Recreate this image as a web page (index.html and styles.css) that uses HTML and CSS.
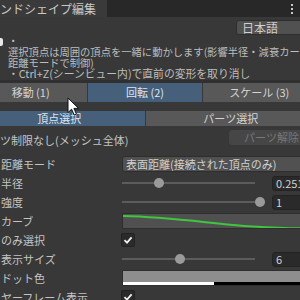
FILE: index.html
```html
<!DOCTYPE html>
<html lang="ja">
<head>
    <meta charset="UTF-8">
    <title>ブレンドシェイプ編集</title>
    <link rel="stylesheet" href="styles.css">
</head>
<body>
    <div class="window">
        <div class="tabbar">
            <div class="tab">ンドシェイプ編集</div>
            <div class="menu-dots"><span></span><span></span><span></span></div>
        </div>

        <div class="lang-row">
            <div class="dropdown lang">日本語</div>
        </div>

        <div class="helpbox">
            <span class="help-icon"></span>
            <div class="help-text">
                <p>・</p>
                <p>選択頂点は周囲の頂点を一緒に動かします(影響半径・減衰カーブ・距</p>
                <p>距離モードで制御)</p>
                <p class="wide">・Ctrl+Z(シーンビュー内)で直前の変形を取り消し</p>
            </div>
        </div>

        <div class="toolbar">
            <div class="tbtn">移動 (1)</div>
            <div class="tbtn on">回転 (2)</div>
            <div class="tbtn">スケール (3)</div>
        </div>

        <div class="toolbar seg">
            <div class="tbtn on">頂点選択</div>
            <div class="tbtn">パーツ選択</div>
        </div>

        <div class="restrict-row">
            <span class="label">ツ制限なし(メッシュ全体)</span>
            <div class="btn disabled">パーツ解除</div>
        </div>

        <div class="props">
            <div class="prop">
                <span class="label">距離モード</span>
                <div class="dropdown">表面距離(接続された頂点のみ)</div>
            </div>
            <div class="prop">
                <span class="label">半径</span>
                <div class="slider">
                    <div class="track"><span class="knob" style="left: 24%"></span></div>
                    <div class="field">0.251</div>
                </div>
            </div>
            <div class="prop">
                <span class="label">強度</span>
                <div class="slider">
                    <div class="track"><span class="knob" style="left: 100%"></span></div>
                    <div class="field">1</div>
                </div>
            </div>
            <div class="prop">
                <span class="label">カーブ</span>
                <div class="curve">
                    <svg width="190" height="16" viewBox="0 0 190 16">
                        <path d="M0 2 C 50 3, 90 10, 130 12.5 S 175 14, 190 14.5" fill="none" stroke="#3fc63f" stroke-width="2"/>
                    </svg>
                </div>
            </div>
            <div class="prop">
                <span class="label">のみ選択</span>
                <div class="check">
                    <svg width="10" height="10" viewBox="0 0 10 10"><path d="M1.5 5.2 L4 7.6 L8.6 2.4" fill="none" stroke="#f0f0f0" stroke-width="1.8"/></svg>
                </div>
            </div>
            <div class="prop">
                <span class="label">表示サイズ</span>
                <div class="slider">
                    <div class="track"><span class="knob" style="left: 40%"></span></div>
                    <div class="field">6</div>
                </div>
            </div>
            <div class="prop">
                <span class="label">ドット色</span>
                <div class="color">
                    <div class="swatch"></div>
                    <div class="alpha"><span style="width: 91px"></span></div>
                </div>
            </div>
            <div class="prop">
                <span class="label">ヤーフレーム表示</span>
                <div class="check">
                    <svg width="10" height="10" viewBox="0 0 10 10"><path d="M1.5 5.2 L4 7.6 L8.6 2.4" fill="none" stroke="#f0f0f0" stroke-width="1.8"/></svg>
                </div>
            </div>
        </div>

        <svg class="cursor" width="14" height="20" viewBox="0 0 14 20">
            <path d="M1 1 L1 15.5 L4.6 12.2 L7.2 18 L9.4 17 L6.9 11.4 L11.6 11.4 Z" fill="#fff" stroke="#111" stroke-width="1" stroke-linejoin="round"/>
        </svg>
    </div>
</body>
</html>
```

FILE: styles.css
```css
body {
    margin: 0;
    padding: 0;
    background: #383838;
    font-family: "Noto Sans CJK JP", "Noto Sans", sans-serif;
    color: #c4c4c4;
}
.window {
    position: relative;
    width: 300px;
    height: 300px;
    overflow: hidden;
    background: #383838;
}
.tabbar {
    display: flex;
    align-items: stretch;
    justify-content: space-between;
    height: 17px;
    background: #282828;
}
.tab {
    width: 107px;
    background: #3a3a3a;
    font-size: 12px;
    line-height: 17px;
    color: #c8c8c8;
    white-space: nowrap;
    overflow: hidden;
}
.menu-dots {
    display: flex;
    flex-direction: column;
    justify-content: center;
    gap: 2px;
    width: 16px;
    align-items: center;
}
.menu-dots span {
    width: 2px;
    height: 2px;
    background: #c8c8c8;
}
.lang-row {
    display: flex;
    justify-content: flex-end;
    margin-top: 3px;
    margin-right: -14px;
    height: 15px;
}
.dropdown {
    box-sizing: border-box;
    height: 15px;
    background: #515151;
    border: 1px solid #2e2e2e;
    border-radius: 3px;
    font-size: 11px;
    line-height: 13px;
    padding-left: 3px;
    color: #d0d0d0;
    white-space: nowrap;
    overflow: hidden;
}
.dropdown.lang {
    width: 78px;
    font-size: 12px;
    padding-left: 5px;
}
.helpbox {
    position: relative;
    height: 45px;
    padding-left: 8px;
    border-bottom: 3px solid #303030;
}
.help-icon {
    position: absolute;
    left: -4px;
    top: 3px;
    width: 7px;
    height: 8px;
    border-radius: 2px;
    background: #e8e8e8;
}
.help-text p {
    margin: 0;
    font-size: 10.3px;
    line-height: 11px;
    color: #bdbdbd;
    white-space: nowrap;
}
.help-text p.wide {
    font-size: 10.8px;
}
.toolbar {
    display: flex;
    gap: 1px;
    height: 19px;
    margin: 0 -16px 0 -26px;
}
.tbtn {
    flex: 1;
    background: #585858;
    color: #d4d4d4;
    font-size: 11px;
    line-height: 19px;
    text-align: center;
    white-space: nowrap;
}
.tbtn.on {
    background: #46607c;
    color: #dde6ef;
}
.toolbar.seg {
    height: 15px;
    margin-top: 9px;
}
.toolbar.seg .tbtn {
    line-height: 15px;
}
.restrict-row {
    display: flex;
    justify-content: space-between;
    align-items: center;
    height: 16px;
    margin: 3px -14px 0 0;
}
.label {
    font-size: 11px;
    padding-left: 1px;
    white-space: nowrap;
    color: #c4c4c4;
}
.restrict-row .label {
    padding-left: 0;
    position: relative;
    top: 3px;
}
.btn {
    box-sizing: border-box;
    width: 85px;
    height: 15px;
    border-radius: 3px;
    font-size: 11px;
    line-height: 15px;
    text-align: center;
}
.btn.disabled {
    background: #464646;
    color: #777;
}
.props {
    display: flex;
    flex-direction: column;
    gap: 3px;
    margin-top: 11px;
}
.prop {
    display: grid;
    grid-template-columns: 122px 1fr;
    align-items: center;
    height: 16px;
    margin-right: -12px;
}
.prop .dropdown {
    height: 16px;
    line-height: 14px;
}
.slider {
    display: flex;
    align-items: center;
    gap: 7px;
}
.track {
    position: relative;
    flex: 1;
    height: 2px;
    background: #5c5c5c;
    margin-right: 10px;
}
.knob {
    position: absolute;
    top: -4px;
    width: 10px;
    height: 10px;
    border-radius: 50%;
    background: #9a9a9a;
}
.field {
    box-sizing: border-box;
    width: 40px;
    height: 15px;
    background: #2a2a2a;
    border: 1px solid #232323;
    border-radius: 3px;
    font-size: 11px;
    line-height: 13px;
    padding-left: 3px;
    color: #d2d2d2;
    overflow: hidden;
}
.curve {
    box-sizing: border-box;
    height: 16px;
    background: #505050;
    border: 1px solid #2e2e2e;
    overflow: hidden;
}
.curve svg {
    display: block;
}
.check {
    box-sizing: border-box;
    width: 14px;
    height: 14px;
    background: #2a2a2a;
    border: 1px solid #222;
    border-radius: 2px;
    display: flex;
    align-items: center;
    justify-content: center;
    margin-left: -1px;
}
.color {
    display: flex;
    flex-direction: column;
    height: 16px;
    border: 1px solid #2e2e2e;
    box-sizing: border-box;
}
.swatch {
    flex: 1;
    background: #8e8e8e;
}
.alpha {
    height: 3px;
    background: #000;
}
.alpha span {
    display: block;
    height: 3px;
    background: #fff;
}
.cursor {
    position: absolute;
    left: 67px;
    top: 97px;
}
```
